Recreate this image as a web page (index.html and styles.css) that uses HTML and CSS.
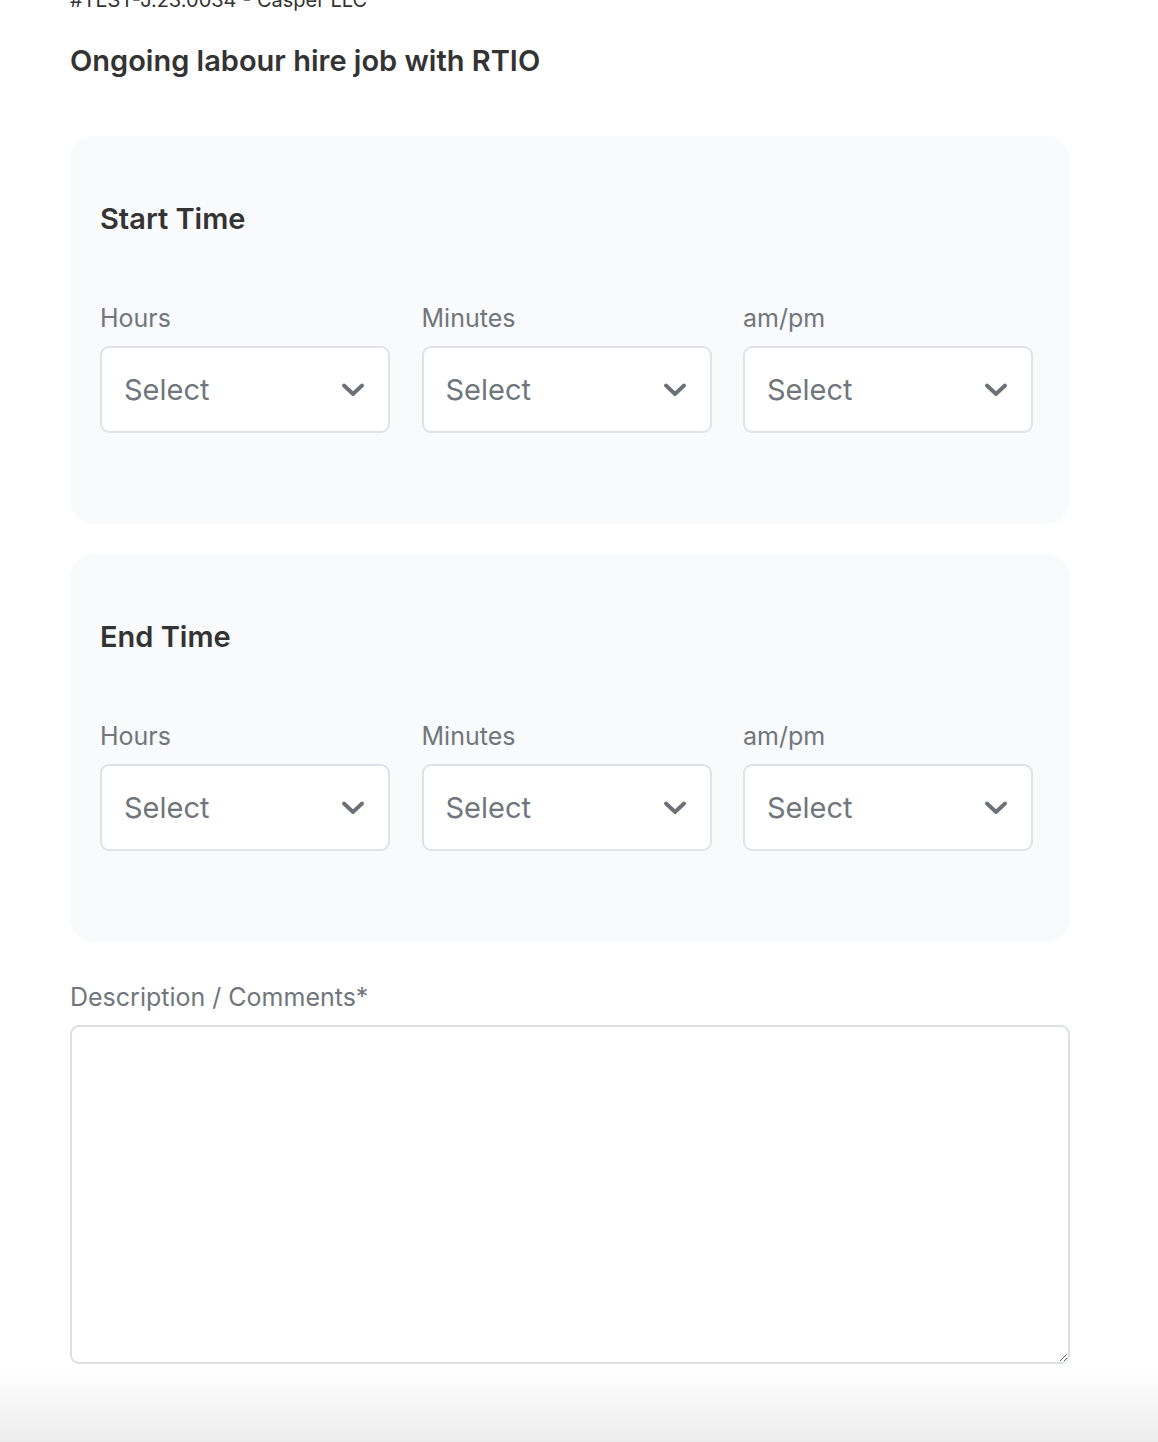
FILE: index.html
```html
<!DOCTYPE html>
<html lang="en">
<head>
<meta charset="utf-8">
<title>Timesheet</title>
<link rel="stylesheet" href="styles.css">
</head>
<body>
<main class="page">
  <div class="ref">#TEST-J.23.0034 - Casper LLC</div>
  <h1 class="title">Ongoing labour hire job with RTIO</h1>

  <section class="card">
    <h2 class="card-title">Start Time</h2>
    <div class="row">
      <div class="field">
        <div class="label">Hours</div>
        <div class="select"><span>Select</span><svg class="chev" width="22" height="14" viewBox="0 0 22 14"><polyline points="2,2.5 11,11 20,2.5"/></svg></div>
      </div>
      <div class="field">
        <div class="label">Minutes</div>
        <div class="select"><span>Select</span><svg class="chev" width="22" height="14" viewBox="0 0 22 14"><polyline points="2,2.5 11,11 20,2.5"/></svg></div>
      </div>
      <div class="field">
        <div class="label">am/pm</div>
        <div class="select"><span>Select</span><svg class="chev" width="22" height="14" viewBox="0 0 22 14"><polyline points="2,2.5 11,11 20,2.5"/></svg></div>
      </div>
    </div>
  </section>

  <section class="card">
    <h2 class="card-title">End Time</h2>
    <div class="row">
      <div class="field">
        <div class="label">Hours</div>
        <div class="select"><span>Select</span><svg class="chev" width="22" height="14" viewBox="0 0 22 14"><polyline points="2,2.5 11,11 20,2.5"/></svg></div>
      </div>
      <div class="field">
        <div class="label">Minutes</div>
        <div class="select"><span>Select</span><svg class="chev" width="22" height="14" viewBox="0 0 22 14"><polyline points="2,2.5 11,11 20,2.5"/></svg></div>
      </div>
      <div class="field">
        <div class="label">am/pm</div>
        <div class="select"><span>Select</span><svg class="chev" width="22" height="14" viewBox="0 0 22 14"><polyline points="2,2.5 11,11 20,2.5"/></svg></div>
      </div>
    </div>
  </section>

  <div class="label desc-label">Description / Comments*</div>
  <textarea class="desc"></textarea>
</main>
<div class="fade"></div>
</body>
</html>
```
FILE: styles.css
```css
html, body {
  margin: 0;
  padding: 0;
  background: #ffffff;
}
body {
  font-family: Inter, "Open Sans", sans-serif;
  color: #333333;
  overflow: hidden;
  height: 1442px;
}
.page {
  width: 1000px;
  padding: 0 88px 0 70px;
  display: flex;
  flex-direction: column;
}
.ref {
  font-size: 20px;
  line-height: 20px;
  height: 20px;
  margin-top: -10px;
  color: #333;
}
.title {
  margin: 33px 0 0;
  font-size: 29px;
  line-height: 36px;
  font-weight: 600;
  color: #333;
}
.card {
  background: #f9fafb;
  border-radius: 24px;
  padding: 65px 37px 91px 30px;
  margin-top: 57px;
}
.card + .card {
  margin-top: 30px;
}
.card-title {
  margin: 0 0 66px;
  font-size: 29px;
  line-height: 36px;
  font-weight: 600;
  color: #333;
}
.row {
  display: grid;
  grid-template-columns: repeat(3, 290px);
  column-gap: 31.5px;
}
.label {
  font-size: 25px;
  line-height: 30px;
  color: #70767b;
  margin-bottom: 13px;
}
.select {
  box-sizing: border-box;
  height: 87px;
  background: #fff;
  border: 2px solid #dfe2e6;
  border-radius: 9px;
  display: flex;
  align-items: center;
  justify-content: space-between;
  padding: 0 24px 0 22px;
  font-size: 29px;
  color: #70767b;
}
.chev {
  fill: none;
  stroke: #6b7176;
  stroke-width: 3.8;
  stroke-linecap: round;
  stroke-linejoin: round;
}
.desc-label {
  margin-top: 40px;
}
.desc {
  box-sizing: border-box;
  width: 1000px;
  height: 339px;
  border: 2px solid #dcdfe3;
  border-radius: 9px;
  background: #fff;
  margin: 0;
  resize: vertical;
  font-family: inherit;
}
.fade {
  position: fixed;
  left: 0;
  right: 0;
  bottom: 0;
  height: 72px;
  background: linear-gradient(to bottom, rgba(236,236,236,0) 0%, #ececec 100%);
  pointer-events: none;
}
```
